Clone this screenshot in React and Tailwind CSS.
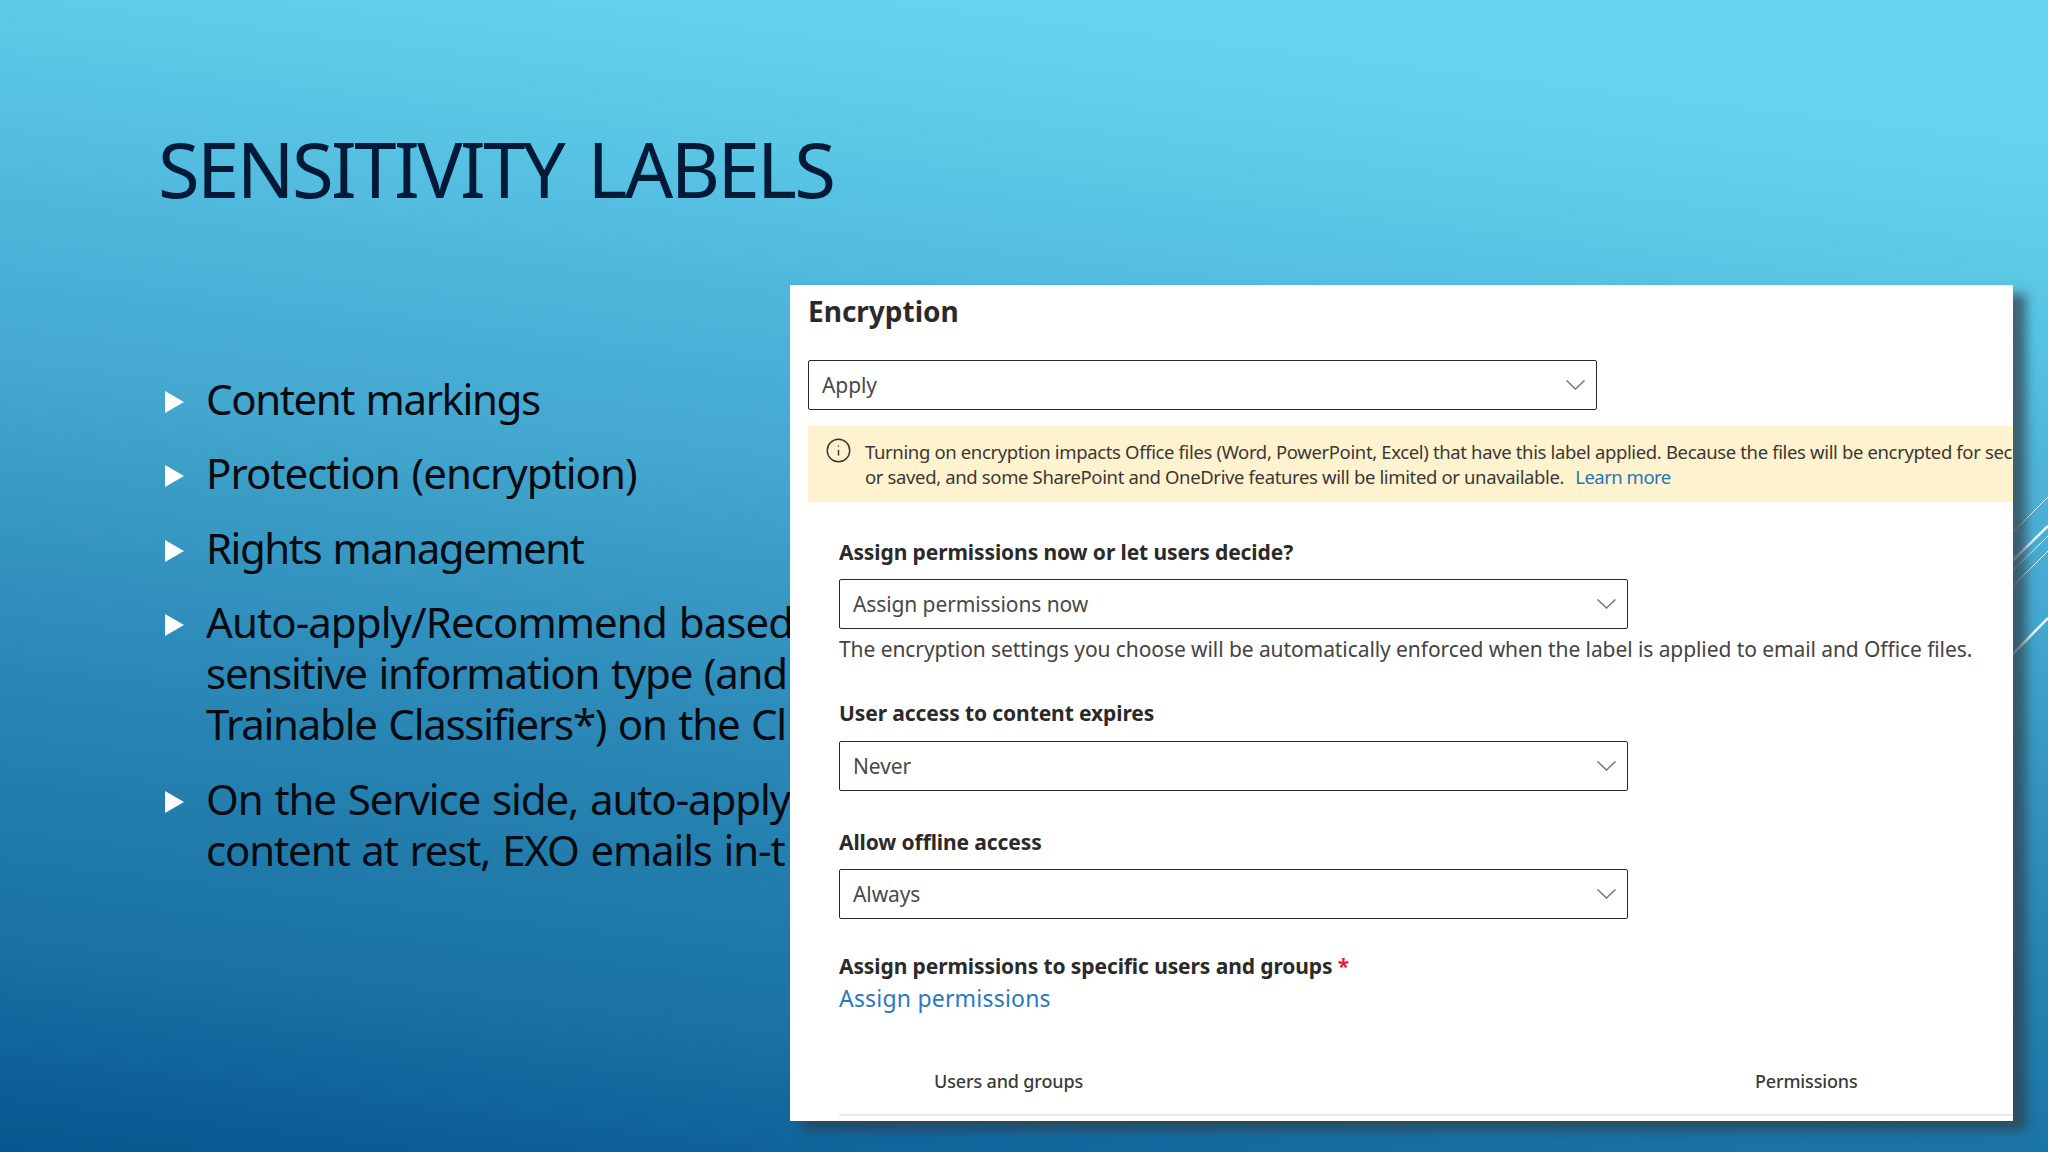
import { Info } from 'lucide-react';

const bullets = [
  [{ text: 'Content markings', tracking: 'tracking-[-1.4px]' }],
  [{ text: 'Protection (encryption)', tracking: 'tracking-[-1px]' }],
  [{ text: 'Rights management', tracking: 'tracking-[-1.5px]' }],
  [
    { text: 'Auto-apply/Recommend based', tracking: 'tracking-[-0.93px]' },
    { text: 'sensitive information type (and', tracking: 'tracking-[-1.22px]' },
    { text: 'Trainable Classifiers*) on the Cl', tracking: 'tracking-[-1.26px]' },
  ],
  [
    { text: 'On the Service side, auto-apply', tracking: 'tracking-[-1.1px]' },
    { text: 'content at rest, EXO emails in-t', tracking: 'tracking-[-1.15px]' },
  ],
];

function Select({ value }) {
  return (
    <div className="flex h-[50px] w-[789px] items-center justify-between rounded-[2px] border border-[#2a2828] bg-white pr-[11px] pl-[13px]">
      <span className="pt-px text-[21px] leading-none tracking-[-0.1px] text-[#4a4846]">{value}</span>
      <svg className="h-[10px] w-[19px]" viewBox="0 0 19 10" fill="none" stroke="#77777a" strokeWidth="1.5">
        <path d="M0.5 0.5 L9.5 9 L18.5 0.5" />
      </svg>
    </div>
  );
}

function Label({ children }) {
  return (
    <p className="text-[21px] leading-[28px] font-bold tracking-[-0.1px] whitespace-nowrap text-[#2b2a29]">
      {children}
    </p>
  );
}

export default function App() {
  return (
    <main className="relative h-[1152px] w-[2048px] overflow-hidden bg-[linear-gradient(7deg,#08568f_0%,#0f649b_7.6%,#1970a4_14.3%,#2480ae_28.5%,#2f8dbb_39%,#3a9cc5_48.5%,#44a8d0_56%,#4eb4da_66.5%,#57c3e3_76%,#5ecde8_83%,#65d4ef_90%)] font-['Noto_Sans',sans-serif]">
      <h1 className="pt-[117px] pl-[158px] text-[76px] leading-[104px] tracking-[-2.6px] whitespace-nowrap text-[#021a38] [word-spacing:7px]">
        SENSITIVITY LABELS
      </h1>

      <ul className="mt-[152px] ml-[165px] flex flex-col gap-[23px]">
        {bullets.map((lines) => (
          <li key={lines[0].text} className="flex gap-[22px]">
            <svg className="mt-[18px] h-[22px] w-[19px] shrink-0" viewBox="0 0 19 22" fill="#fff">
              <path d="M0 0 L19 11 L0 22 Z" />
            </svg>
            <div className="text-[42px] leading-[51.3px] whitespace-nowrap text-[#060b12] [word-spacing:2px]">
              {lines.map((line) => (
                <p key={line.text} className={line.tracking}>{line.text}</p>
              ))}
            </div>
          </li>
        ))}
      </ul>

      {/* diagonal accent strokes at the slide's right edge */}
      <svg className="absolute top-[480px] right-0 h-[200px] w-[88px]" viewBox="0 0 88 200" stroke="#e6f6fb">
        <path d="M48 57 L88 17" strokeWidth="1" />
        <path d="M48 85 L88 46" strokeWidth="2.5" />
        <path d="M48 95 L88 56" strokeWidth="1" />
        <path d="M48 111 L88 71" strokeWidth="1" />
        <path d="M48 179 L88 138" strokeWidth="2.5" />
      </svg>

      {/* pasted settings panel, on top of the bullet text */}
      <section className="absolute top-[285px] left-[790px] flex h-[836px] w-[1223px] flex-col overflow-hidden bg-white pl-[18px] shadow-[13px_9px_10px_0px_rgba(50,60,70,0.7)]">
        <h2 className="mt-[7px] text-[28px] leading-[38px] font-bold text-[#2b2a29]">Encryption</h2>
        <div className="mt-[30px]"><Select value="Apply" /></div>

        <div className="mt-[16px] flex h-[76px] shrink-0 bg-[#fff2cf] pt-[11px] pl-[17px] text-[18.5px] leading-[25px] tracking-[-0.36px] whitespace-nowrap text-[#3b3835]">
          <Info className="mr-[13px] size-[27px] shrink-0" strokeWidth={1.3} />
          <div className="pt-[2px]">
            <p>Turning on encryption impacts Office files (Word, PowerPoint, Excel) that have this label applied. Because the files will be encrypted for sec</p>
            <p>
              or saved, and some SharePoint and OneDrive features will be limited or unavailable.
              <a className="ml-[11px] tracking-[-0.5px] text-[#1f78b4]">Learn more</a>
            </p>
          </div>
        </div>

        <div className="flex flex-col pl-[31px]">
          <div className="mt-[36px]"><Label>Assign permissions now or let users decide?</Label></div>
          <div className="mt-[13px]"><Select value="Assign permissions now" /></div>
          <p className="mt-[6px] text-[21px] leading-[28px] tracking-[-0.08px] whitespace-nowrap text-[#454341]">
            The encryption settings you choose will be automatically enforced when the label is applied to email and Office files.
          </p>
          <div className="mt-[36px]"><Label>User access to content expires</Label></div>
          <div className="mt-[14px]"><Select value="Never" /></div>
          <div className="mt-[37px]"><Label>Allow offline access</Label></div>
          <div className="mt-[13px]"><Select value="Always" /></div>
          <div className="mt-[33px]">
            <Label>Assign permissions to specific users and groups <span className="text-[#e81c2e]">*</span></Label>
          </div>
          <a className="mt-[2px] text-[23px] leading-[32px] tracking-[0.2px] text-[#2a78c4]">Assign permissions</a>
          <div className="mt-[55px] flex h-[47px] border-b-2 border-[#e9e9e9] pl-[95px] text-[18px] leading-[24px] font-medium tracking-[-0.15px] text-[#3b3a39]">
            <span className="w-[821px]">Users and groups</span>
            <span>Permissions</span>
          </div>
        </div>
      </section>
    </main>
  );
}
